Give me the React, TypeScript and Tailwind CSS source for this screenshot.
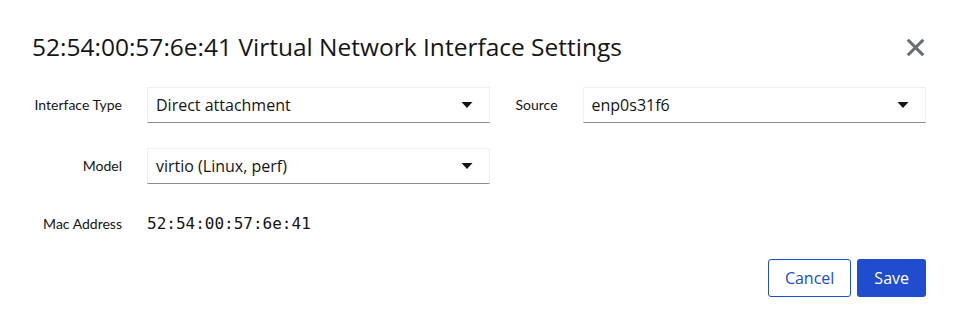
const FONT = "font-['Open_Sans',sans-serif]";
const LABEL = "whitespace-nowrap font-['Lato',sans-serif] text-sm";

function Caret() {
  return (
    <svg width="12" height="8" viewBox="0 0 12 8" className="text-[#151515]">
      <path d="M0.5 1 L11.5 1 L6 7 Z" fill="currentColor" />
    </svg>
  );
}

function Select({ value }: { value: string }) {
  return (
    <div className="flex h-9 items-center justify-between border border-[#f0f0f0] border-b-[#8a8d90] pl-2 pr-4 text-base text-[#151515]">
      <span>{value}</span>
      <Caret />
    </div>
  );
}

export default function App() {
  return (
    <div className={`h-[329px] w-[958px] bg-white ${FONT}`}>
      <div className="flex items-center justify-between px-8 pt-[31px]">
        <h1 className="text-[24.5px] font-medium leading-8 text-[#151515]">
          52:54:00:57:6e:41 Virtual Network Interface Settings
        </h1>
        <svg width="19" height="19" viewBox="0 0 20 20" className="mr-[1px]">
          <path d="M3 3 L17 17 M17 3 L3 17" stroke="#6a6e73" strokeWidth="3.2" strokeLinecap="square" />
        </svg>
      </div>

      <div className="mt-[24px] grid grid-cols-[90px_1fr_auto_1fr] items-center gap-x-[25px] gap-y-[25px] px-8 text-[#151515]">
        <label className={`${LABEL} text-right`}>Interface Type</label>
        <Select value="Direct attachment" />
        <label className={LABEL}>Source</label>
        <Select value="enp0s31f6" />

        <label className={`${LABEL} text-right`}>Model</label>
        <Select value="virtio (Linux, perf)" />
        <div />
        <div />

        <label className={`${LABEL} mt-[3px] text-right`}>Mac Address</label>
        <div className="mt-[3px] font-['DejaVu_Sans_Mono',monospace] text-base">52:54:00:57:6e:41</div>
      </div>

      <div className="mt-[23px] flex justify-end gap-[6px] px-8">
        <button className="h-[38px] rounded-[3px] border border-[#204dcd] px-4 text-base text-[#204dcd]">
          Cancel
        </button>
        <button className="h-[38px] rounded-[3px] bg-[#204dcd] px-[17px] text-base text-white">
          Save
        </button>
      </div>
    </div>
  );
}
